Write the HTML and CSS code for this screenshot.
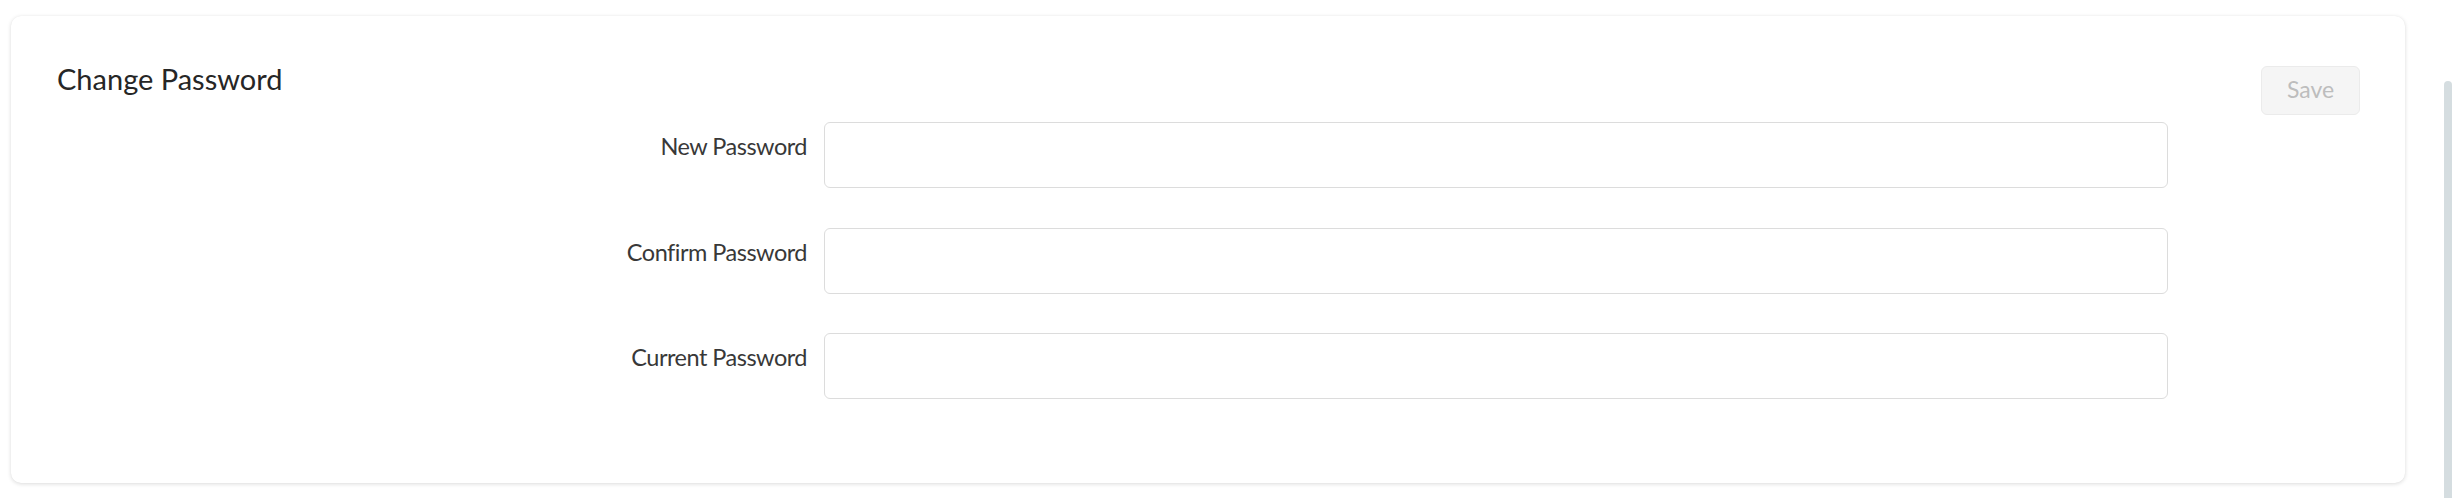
FILE: index.html
```html
<!DOCTYPE html>
<html>
<head>
<meta charset="utf-8">
<link rel="stylesheet" href="styles.css">
</head>
<body>
<div class="page">
  <section class="card">
    <header class="card-header">
      <h2 class="card-title">Change Password</h2>
      <button class="btn-save" disabled>Save</button>
    </header>
    <form class="pw-form">
      <label class="field-label" for="new">New Password</label>
      <input class="field-input" id="new" type="password">
      <label class="field-label" for="confirm">Confirm Password</label>
      <input class="field-input" id="confirm" type="password">
      <label class="field-label" for="current">Current Password</label>
      <input class="field-input" id="current" type="password">
    </form>
  </section>
  <div class="scroll-thumb"></div>
</div>
</body>
</html>
```
FILE: styles.css
```css
html, body {
  margin: 0;
  padding: 0;
  background: #ffffff;
  overflow: hidden;
}
body {
  font-family: "Lato", "Noto Sans", sans-serif;
  color: #2b2b2b;
}
.page {
  position: relative;
  width: 2460px;
  height: 498px;
  box-sizing: border-box;
  padding: 16px 55px 0 11px;
}
.card {
  background: #fff;
  border-radius: 10px;
  box-shadow: 0 1px 4px rgba(0, 0, 0, 0.14), 0 0 1px rgba(0, 0, 0, 0.06);
  padding: 50px 45px 84px 46px;
  height: 467px;
  box-sizing: border-box;
}
.card-header {
  display: flex;
  justify-content: space-between;
  align-items: flex-start;
}
.card-title {
  margin: 0;
  font-size: 29px;
  font-weight: 400;
  line-height: 34px;
  color: #262626;
  margin-top: -4px;
}
.btn-save {
  width: 99px;
  height: 49px;
  box-sizing: border-box;
  border: 1px solid #ebebeb;
  border-radius: 6px;
  background: #f5f5f5;
  color: #bdbdbd;
  font-family: inherit;
  font-size: 23px;
  padding: 0 0 3px 0;
}
.pw-form {
  display: grid;
  grid-template-columns: 750px 1344px;
  column-gap: 17px;
  row-gap: 39.5px;
  margin-top: 7px;
}
.field-label {
  text-align: right;
  font-size: 23.5px;
  letter-spacing: -0.5px;
  line-height: 28px;
  padding-top: 10px;
  color: #383838;
}
.field-input {
  height: 66px;
  box-sizing: border-box;
  border: 1px solid #dcdcdc;
  border-radius: 6px;
  background: #fff;
  margin: 0;
}
.scroll-thumb {
  position: absolute;
  left: 2444px;
  top: 81px;
  width: 8px;
  height: 430px;
  border-radius: 4px;
  background: #d5dde0;
}
```
